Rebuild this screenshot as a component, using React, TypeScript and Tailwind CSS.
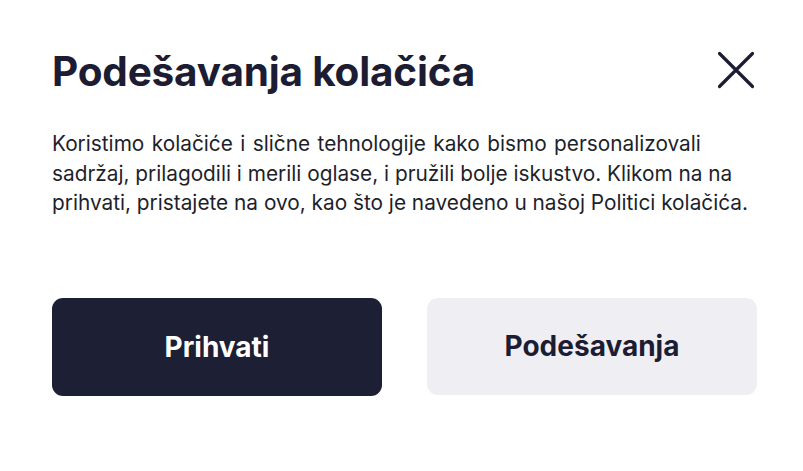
import React from "react";

export default function App() {
  return (
    <div className="w-[803px] h-[471px] bg-white overflow-hidden" style={{ fontFamily: "Inter, 'Noto Sans', sans-serif" }}>
      <div className="pl-[52px] pr-[46px] pt-[44px]">
        <div className="flex items-start justify-between">
          <h1 className="text-[40.5px] leading-[56px] font-bold text-[#1c1d33] tracking-[-0.2px]">Podešavanja kolačića</h1>
          <button className="mt-[4px] -mr-[1px] w-[44px] h-[44px] flex items-center justify-center">
            <svg width="40" height="40" viewBox="0 0 40 40" fill="none" stroke="#1c1d33" strokeWidth="3.2" strokeLinecap="round">
              <path d="M3.5 3.5 L36.5 36.5 M36.5 3.5 L3.5 36.5" />
            </svg>
          </button>
        </div>
        <p className="mt-[29px] text-[20.8px] leading-[29.5px] text-[#1e1f2b] whitespace-nowrap" style={{ fontFamily: "Inter, 'Noto Sans', sans-serif" }}>
          <span className="[word-spacing:1.6px]">Koristimo kolačiće i slične tehnologije kako bismo personalizovali</span>
          <br />
          sadržaj, prilagodili i merili oglase, i pružili bolje iskustvo. Klikom na na
          <br />
          prihvati, pristajete na ovo, kao što je navedeno u našoj Politici kolačića.
        </p>
        <div className="mt-[80px] flex gap-[45px]">
          <button className="flex-1 h-[98px] rounded-[11px] bg-[#1d1f35] text-white text-[28px] font-bold flex items-center justify-center">
            Prihvati
          </button>
          <button className="flex-1 h-[97px] rounded-[11px] bg-[#efeff3] text-[#1c1d33] text-[28px] font-bold flex items-center justify-center">
            Podešavanja
          </button>
        </div>
      </div>
    </div>
  );
}
